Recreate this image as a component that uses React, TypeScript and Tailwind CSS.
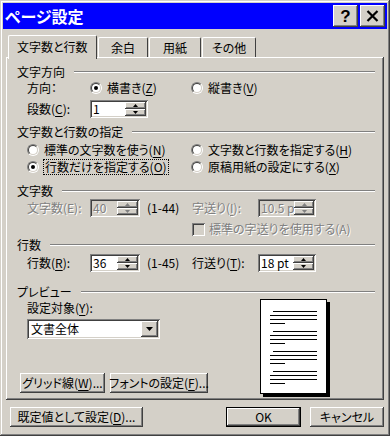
import React from "react";

const raised =
  "bg-[#d4d0c8] shadow-[inset_-1px_-1px_#404040,inset_1px_1px_#ffffff,inset_-2px_-2px_#808080,inset_2px_2px_#d4d0c8]";
const sunken =
  "shadow-[inset_1px_1px_#808080,inset_-1px_-1px_#ffffff,inset_2px_2px_#404040,inset_-2px_-2px_#d4d0c8]";
const dim = "text-[#808080] [text-shadow:1px_1px_0_#ffffff]";

const U = ({ children }: { children: React.ReactNode }) => (
  <span className="underline decoration-1 underline-offset-[2px]">{children}</span>
);

function Radio({ checked }: { checked?: boolean }) {
  return (
    <span className="flex h-[12px] w-[12px] shrink-0 rounded-full border border-t-[#808080] border-l-[#808080] border-b-white border-r-white">
      <span className="flex flex-1 items-center justify-center rounded-full border border-t-[#404040] border-l-[#404040] border-b-[#d4d0c8] border-r-[#d4d0c8] bg-white">
        {checked && <span className="h-[4px] w-[4px] rounded-full bg-black" />}
      </span>
    </span>
  );
}

function Arrow({ up, color = "#000" }: { up?: boolean; color?: string }) {
  return (
    <svg width="5" height="3" viewBox="0 0 5 3">
      <path d={up ? "M2.5 0 L5 3 L0 3 Z" : "M0 0 L5 0 L2.5 3 Z"} fill={color} />
    </svg>
  );
}

function Spin({ value, width, disabled }: { value: string; width: string; disabled?: boolean }) {
  return (
    <div className={`flex h-[18px] ${width} ${sunken} p-[2px] ${disabled ? "bg-[#d4d0c8]" : "bg-white"}`}>
      <div className={`flex flex-1 items-center whitespace-nowrap pl-[1px] ${disabled ? dim : ""}`}>{value}</div>
      <div className="flex w-[21px] flex-col">
        <div className={`${raised} flex flex-1 items-center justify-center`}>
          <Arrow up color={disabled ? "#808080" : "#000"} />
        </div>
        <div className={`${raised} flex flex-1 items-center justify-center`}>
          <Arrow color={disabled ? "#808080" : "#000"} />
        </div>
      </div>
    </div>
  );
}

function Group({ label, className }: { label: string; className: string }) {
  return (
    <div className={`flex h-[14px] items-center ${className}`}>
      <span>{label}</span>
      <div className="ml-[9px] h-[2px] flex-1 border-t border-b border-t-[#808080] border-b-white" />
    </div>
  );
}

function Button({ children, width, isDefault }: { children: React.ReactNode; width: string; isDefault?: boolean }) {
  if (isDefault) {
    return (
      <div className={`flex h-[20px] ${width} border border-black`}>
        <div className={`${raised} flex flex-1 items-center justify-center whitespace-nowrap`}>{children}</div>
      </div>
    );
  }
  return <div className={`${raised} flex h-[20px] ${width} items-center justify-center whitespace-nowrap`}>{children}</div>;
}

function PageLines() {
  return (
    <div className="flex flex-col gap-[3px]">
      <div className="ml-[3px] h-[1px] w-[44px] bg-black" />
      <div className="h-[1px] w-[47px] bg-black" />
      <div className="h-[1px] w-[47px] bg-black" />
      <div className="h-[1px] w-[15px] bg-black" />
    </div>
  );
}

export default function App() {
  return (
    <div className="h-[436px] w-[390px] bg-[#d4d0c8] p-[3px] text-[12px] leading-none text-black font-['Noto_Sans_CJK_JP',sans-serif] [font-feature-settings:'palt'] shadow-[inset_-1px_-1px_#404040,inset_1px_1px_#d4d0c8,inset_-2px_-2px_#808080,inset_2px_2px_#ffffff]">
      {/* Title bar */}
      <div className="flex h-[26px] items-center justify-between bg-[#0000ff] pl-[2px] pr-[2px]">
        <span className="text-[16px] font-bold text-white">ページ設定</span>
        <div className="flex gap-[2px]">
          <div className={`${raised} flex h-[22px] w-[25px] items-center justify-center text-[17px] font-bold font-['Liberation_Sans',sans-serif]`}>?</div>
          <div className={`${raised} flex h-[22px] w-[25px] items-center justify-center`}>
            <svg width="13" height="12" viewBox="0 0 13 12">
              <path d="M1.5 1 L11.5 11 M11.5 1 L1.5 11" stroke="#000" strokeWidth="2.2" />
            </svg>
          </div>
        </div>
      </div>

      {/* Tabs */}
      <div className="mt-[6px] flex h-[22px] items-end pl-[5px]">
        <div className="relative z-10 -mb-[2px] flex h-[24px] w-[89px] items-start rounded-t-[2px] border-t border-l border-r border-t-white border-l-white border-r-[#404040] bg-[#d4d0c8] pl-[8px] pt-[5px]">
          文字数と行数
        </div>
        <div className="ml-[1px] flex h-[20px] w-[50px] items-center justify-center rounded-t-[2px] border-t border-l border-r border-t-white border-l-white border-r-[#404040]">余白</div>
        <div className="ml-[1px] flex h-[20px] w-[52px] items-center justify-center rounded-t-[2px] border-t border-l border-r border-t-white border-l-white border-r-[#404040]">用紙</div>
        <div className="ml-[1px] flex h-[20px] w-[54px] items-center justify-center rounded-t-[2px] border-t border-l border-r border-t-white border-l-white border-r-[#404040]">その他</div>
      </div>

      {/* Panel */}
      <div className={`${raised} ml-[3px] mr-[3px] flex h-[343px] flex-col pl-[11px] pr-[9px] pt-[2px]`}>
        <Group label="文字方向" className="mt-[6px]" />
        <div className="mt-[1px] flex h-[16px] items-center pl-[10px]">
          <div className="w-[63px]">方向：</div>
          <div className="flex w-[101px] items-center gap-[5px]">
            <Radio checked />
            <span>横書き(<U>Z</U>)</span>
          </div>
          <div className="flex items-center gap-[5px]">
            <Radio />
            <span>縦書き(<U>V</U>)</span>
          </div>
        </div>
        <div className="mt-[4px] flex h-[18px] items-center pl-[10px]">
          <div className="w-[63px]">段数(<U>C</U>):</div>
          <Spin value="1" width="w-[58px]" />
        </div>

        <Group label="文字数と行数の指定" className="mt-[7px]" />
        <div className="mt-[3px] flex h-[15px] items-center pl-[10px]">
          <div className="flex w-[164px] items-center gap-[5px]">
            <Radio />
            <span>標準の文字数を使う(<U>N</U>)</span>
          </div>
          <div className="flex items-center gap-[5px]">
            <Radio />
            <span>文字数と行数を指定する(<U>H</U>)</span>
          </div>
        </div>
        <div className="mt-[2px] flex h-[16px] items-center pl-[10px]">
          <div className="flex w-[164px] items-center gap-[4px]">
            <Radio checked />
            <span className="border border-dotted border-black px-[1px] py-[1px]">行数だけを指定する(<U>O</U>)</span>
          </div>
          <div className="flex items-center gap-[5px]">
            <Radio />
            <span>原稿用紙の設定にする(<U>X</U>)</span>
          </div>
        </div>

        <Group label="文字数" className="mt-[9px]" />
        <div className="mt-[1px] flex h-[18px] items-center pl-[10px]">
          <div className="flex w-[165px] items-center">
            <div className={`w-[63px] ${dim}`}>文字数(E):</div>
            <Spin value="40" width="w-[50px]" disabled />
            <span className="ml-[7px]">(1-44)</span>
          </div>
          <div className={`w-[66px] ${dim}`}>字送り(<U>I</U>):</div>
          <Spin value="10.5 p" width="w-[58px]" disabled />
        </div>
        <div className="mt-[5px] flex h-[14px] items-center pl-[10px]">
          <div className="w-[165px]" />
          <div className={`h-[13px] w-[13px] bg-[#d4d0c8] ${sunken}`} />
          <span className={`ml-[4px] ${dim}`}>標準の字送りを使用する(A)</span>
        </div>

        <Group label="行数" className="mt-[2px]" />
        <div className="mt-[2px] flex h-[18px] items-center pl-[10px]">
          <div className="flex w-[165px] items-center">
            <div className="w-[63px]">行数(<U>R</U>):</div>
            <Spin value="36" width="w-[50px]" />
            <span className="ml-[7px]">(1-45)</span>
          </div>
          <div className="w-[66px]">行送り(<U>T</U>):</div>
          <Spin value="18 pt" width="w-[58px]" />
        </div>

        <Group label="プレビュー" className="mt-[13px]" />
        <div className="flex">
          <div className="flex w-[243px] flex-col">
            <div className="mt-[2px] flex h-[14px] items-center pl-[10px]">設定対象(<U>Y</U>):</div>
            <div className={`ml-[10px] mt-[4px] flex h-[20px] w-[133px] bg-white p-[2px] ${sunken}`}>
              <div className="flex flex-1 items-center pl-[2px]">文書全体</div>
              <div className={`${raised} flex w-[17px] items-center justify-center`}>
                <svg width="7" height="4" viewBox="0 0 7 4">
                  <path d="M0 0 L7 0 L3.5 4 Z" fill="#000" />
                </svg>
              </div>
            </div>
            <div className="ml-[3px] mt-[34px] flex gap-[5px]">
              <Button width="w-[85px]">グリッド線(<U>W</U>)...</Button>
              <Button width="w-[98px]">フォントの設定(<U>F</U>)...</Button>
            </div>
          </div>
          <div className="flex h-[95px] w-[67px] flex-col gap-[7px] border border-black bg-white pl-[9px] pt-[11px] shadow-[3px_3px_0_#000]">
            <PageLines />
            <PageLines />
            <PageLines />
            <PageLines />
          </div>
        </div>
      </div>

      {/* Bottom buttons */}
      <div className="mt-[7px] flex items-center pl-[7px] pr-[3px]">
        <Button width="w-[133px]">既定値として設定(<U>D</U>)...</Button>
        <div className="flex-1" />
        <Button width="w-[75px]" isDefault>OK</Button>
        <div className="ml-[9px]">
          <Button width="w-[74px]">キャンセル</Button>
        </div>
      </div>
    </div>
  );
}
